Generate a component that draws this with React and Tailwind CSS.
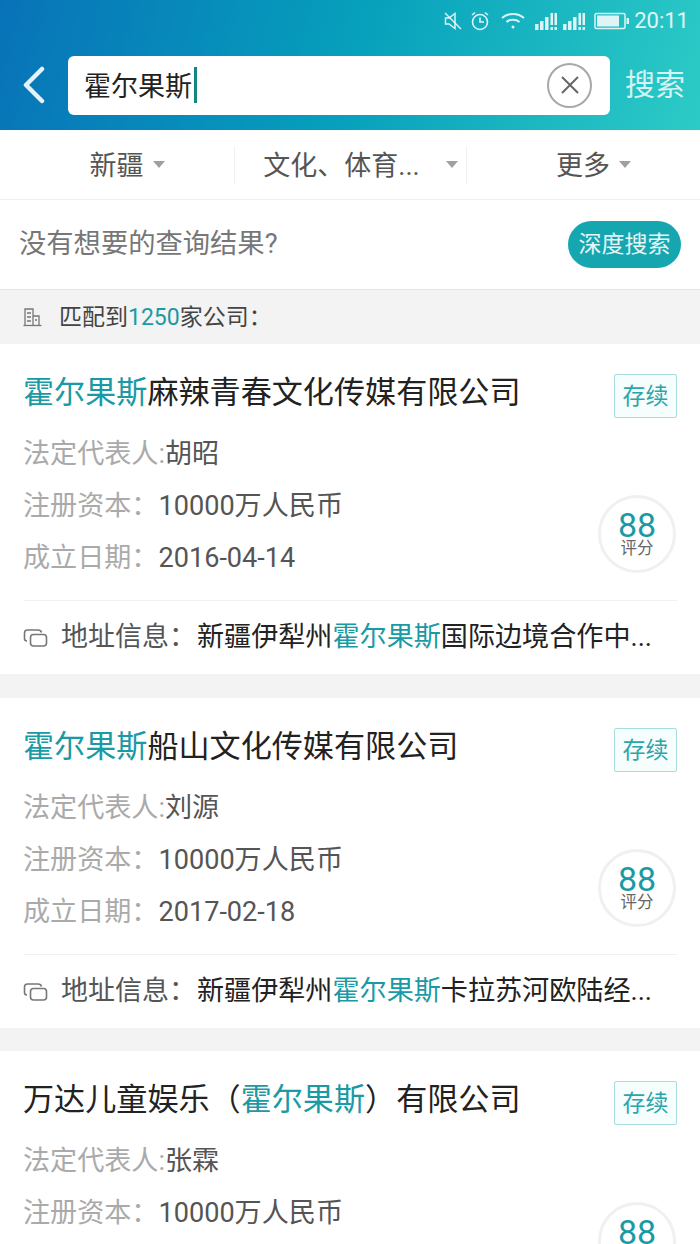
const FONT = '[font-family:Roboto,"Noto_Sans_CJK_SC",sans-serif]';

const companies = [
  {
    name: [['霍尔果斯', true], ['麻辣青春文化传媒有限公司', false]],
    legal: '胡昭',
    capital: '10000万人民币',
    date: '2016-04-14',
    addr: ['新疆伊犁州', '霍尔果斯', '国际边境合作中...'],
  },
  {
    name: [['霍尔果斯', true], ['船山文化传媒有限公司', false]],
    legal: '刘源',
    capital: '10000万人民币',
    date: '2017-02-18',
    addr: ['新疆伊犁州', '霍尔果斯', '卡拉苏河欧陆经...'],
  },
  {
    name: [['万达儿童娱乐（', false], ['霍尔果斯', true], ['）有限公司', false]],
    legal: '张霖',
    capital: '10000万人民币',
    date: '2016-11-02',
    addr: ['新疆伊犁州', '霍尔果斯', '国际边境合作中...'],
  },
];

// 状态栏图标
const StatusIcons = () => (
  <div className="flex items-center justify-end h-[40px] pr-[11px] pt-[2px] text-white/85">
    <svg width="20" height="20" viewBox="0 0 20 20" fill="none" stroke="currentColor" strokeWidth="1.5" className="mr-[6px]">
      <path d="M2.500 7h3.500l6-4.500v15L6 13H2.500z" />
      <path d="M2 2l16 16" />
    </svg>
    <svg width="22" height="22" viewBox="0 0 22 22" fill="none" stroke="currentColor" strokeWidth="1.6" className="mr-[9px]">
      <circle cx="11" cy="12" r="7.500" />
      <path d="M11 7.500V12h4" />
      <path d="M3 5l3-2.500M19 5l-3-2.500" />
    </svg>
    <svg width="26" height="20" viewBox="0 0 26 20" fill="none" stroke="currentColor" strokeWidth="2" className="mr-[8px]">
      <path d="M2 7c6-5.500 16-5.500 22 0" />
      <path d="M6.500 11c3.500-3 9.500-3 13 0" />
      <circle cx="13" cy="16" r="1.500" fill="currentColor" stroke="none" />
    </svg>
    {[0, 1].map(i => (
      <svg key={i} width="24" height="20" viewBox="0 0 24 20" fill="currentColor" className="mr-[4px]">
        <rect x="1" y="13" width="3.500" height="6" />
        <rect x="6" y="10" width="3.500" height="9" />
        <rect x="11" y="6" width="3.500" height="13" />
        <rect x="16.500" y="2" width="2.500" height="12" />
        <rect x="16.500" y="16" width="2.500" height="3" />
        <rect x="20.500" y="2" width="2.500" height="12" />
        <rect x="20.500" y="16" width="2.500" height="3" />
      </svg>
    ))}
    <svg width="36" height="18" viewBox="0 0 36 18" fill="none" className="ml-[4px] mr-[4px]">
      <rect x="1" y="1.500" width="30" height="15" rx="1.500" stroke="currentColor" strokeWidth="1.500" />
      <rect x="3" y="3.500" width="22" height="11" fill="currentColor" />
      <rect x="32.500" y="6" width="2.500" height="6" fill="currentColor" />
    </svg>
    <span className="text-[22px] leading-none font-[Roboto,sans-serif]">20:11</span>
  </div>
);

const Filter = ({ label, width, pad, gap, divider }) => (
  <div className={`h-[38px] flex items-center justify-center ${width} ${pad} ${divider ? 'border-r border-[#f0f0f0]' : ''}`}>
    <span className="text-[27px] leading-none text-[#555] relative top-[2px]">{label}</span>
    <span className={`${gap} w-0 h-0 border-x-[6px] border-x-transparent border-t-[7px] border-t-[#a0a0a0]`} />
  </div>
);

const CompanyCard = ({ company }) => (
  <div className="bg-white pt-[28px] pl-[24px] pr-[23px] last:-mt-[1px]">
    <div className="flex items-start justify-between">
      <h2 className="-ml-[1px] text-[31.100px] leading-[42px] font-normal text-[#222]">
        {company.name.map(([t, hl]) => (
          <span key={t} className={hl ? 'text-[#1a9aa5]' : ''}>{t}</span>
        ))}
      </h2>
      <div className="mt-[2px] w-[63px] h-[44px] flex items-center justify-center border border-[#a9dcdc] rounded-[2px] bg-[#f6fdfd] text-[#2aa6ab] text-[23px] leading-none">
        存续
      </div>
    </div>

    <div className="flex items-end justify-between mt-[10px]">
      <div className="-ml-[1px] text-[27.100px] leading-[52px] text-[#aaa]">
        <div>法定代表人:<span className="text-[#555]">{company.legal}</span></div>
        <div>注册资本：<span className="text-[#555]">{company.capital}</span></div>
        <div>成立日期：<span className="text-[#555]">{company.date}</span></div>
      </div>
      <div className="mb-[11px] mr-[1px] w-[78px] h-[78px] rounded-full border-[3px] border-[#f0f0f0] flex flex-col items-center justify-center">
        <span className="text-[34px] leading-[30px] text-[#1a9aa5]">88</span>
        <span className="text-[16.500px] leading-[18px] text-[#666]">评分</span>
      </div>
    </div>

    <div className="mt-[16px] border-t border-[#f0f0f0] h-[74px] flex items-center">
      <svg width="25" height="20" viewBox="0 0 25 20" fill="none" stroke="#777" strokeWidth="1.600" className="-ml-[1px] mr-[13px]">
        <path d="M4 13C2.500 13 1.500 12 1.500 10.500V5Q1.500 2 4.500 2H15Q18 2 18.500 4.500" />
        <rect x="7.500" y="6.500" width="16" height="11.500" rx="3" />
      </svg>
      <span className="text-[27px] leading-none text-[#555] whitespace-nowrap">地址信息：</span>
      <span className="ml-[1px] text-[27.100px] leading-none text-[#222] whitespace-nowrap">
        {company.addr[0]}
        <span className="text-[#1a9aa5]">{company.addr[1]}</span>
        {company.addr[2]}
      </span>
    </div>
  </div>
);

const App = () => (
  <div className={`w-[700px] h-[1244px] overflow-hidden bg-[#f3f3f3] ${FONT}`}>
    {/* Header */}
    <div className="h-[130px] bg-[linear-gradient(105deg,#0872b8_0%,#06a0bc_50%,#2ccbc6_100%)]">
      <StatusIcons />
      <div className="flex items-center h-[60px] mt-[15px]">
        <div className="w-[68px] flex justify-center">
          <svg width="24" height="38" viewBox="0 0 24 38" fill="none" stroke="white" strokeWidth="4.500" strokeLinecap="round" strokeLinejoin="round" className="opacity-90">
            <path d="M20 3L4 19l16 16" />
          </svg>
        </div>
        <div className="w-[542px] h-[59px] bg-white rounded-[6px] flex items-center pl-[16px] pr-[18px]">
          <span className="text-[27px] leading-none text-[#222] relative top-[2px]">霍尔果斯</span>
          <span className="ml-[2px] w-[3px] h-[36px] bg-[#11877f]" />
          <div className="ml-auto w-[45px] h-[45px] rounded-full border-2 border-[#a8a8a8] flex items-center justify-center">
            <svg width="22" height="22" viewBox="0 0 22 22" fill="none" stroke="#666" strokeWidth="2">
              <path d="M3 3l16 16M19 3L3 19" />
            </svg>
          </div>
        </div>
        <span className="ml-[15px] text-[30px] leading-none text-white/80">搜索</span>
      </div>
    </div>

    {/* 筛选 */}
    <div className="h-[70px] bg-white border-b border-[#efefef] flex items-center">
      <Filter label="新疆" width="w-[235px]" pad="pl-[20px]" gap="ml-[9px]" divider />
      <Filter label="文化、体育..." width="w-[232px]" pad="pl-[20px]" gap="ml-[26px]" divider />
      <Filter label="更多" width="flex-1" pad="pl-[20px]" gap="ml-[9px]" />
    </div>

    {/* 深度搜索 */}
    <div className="h-[90px] bg-white border-b border-[#e6e6e6] flex items-center justify-between pl-[19px] pr-[19px]">
      <span className="text-[27.300px] leading-none text-[#777]">没有想要的查询结果?</span>
      <span className="w-[113px] h-[47px] rounded-full bg-[#15a6b0] flex items-center justify-center text-[23px] leading-none text-white/90">
        深度搜索
      </span>
    </div>

    {/* 匹配数 */}
    <div className="h-[54px] flex items-center pl-[23px]">
      <svg width="19" height="20" viewBox="0 0 19 20" fill="none" stroke="#777" strokeWidth="1.300" className="mr-[17px]">
        <path d="M2 18V2h8v16" />
        <path d="M10 9h6v9" />
        <path d="M0.500 18.500h18" />
        <path d="M4 6h4M4 10h4M4 14h4M12 13h2" />
      </svg>
      <span className="text-[23px] leading-none text-[#444]">
        匹配到<span className="text-[#1a9aa5]">1250</span>家公司：
      </span>
    </div>

    {/* 公司列表 */}
    <div className="flex flex-col gap-[24px]">
      {companies.map(c => (
        <CompanyCard key={c.date} company={c} />
      ))}
    </div>
  </div>
);

export default App;
